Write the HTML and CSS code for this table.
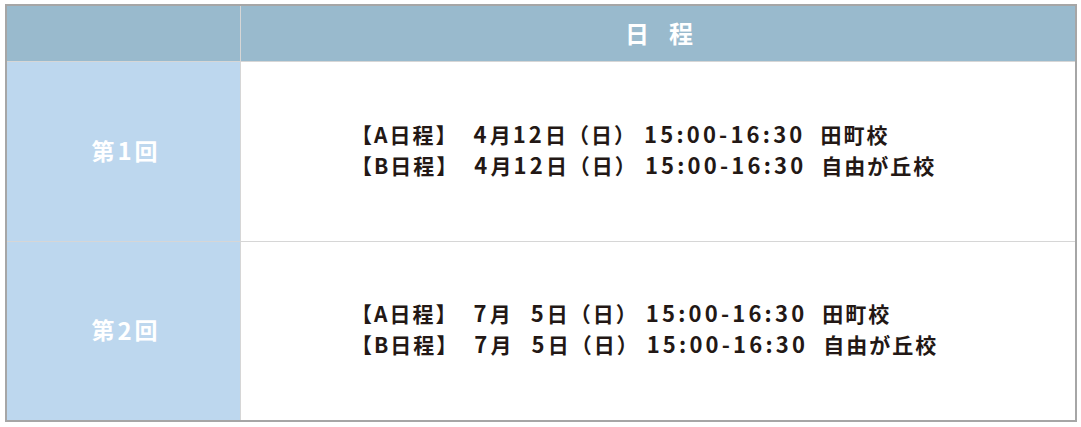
FILE: index.html
```html
<!DOCTYPE html>
<html lang="ja">
<head>
<meta charset="utf-8">
<link rel="stylesheet" href="styles.css">
</head>
<body>
<div class="schedule">
  <div class="head head-blank"></div>
  <div class="head head-title"><span>日</span><span>程</span></div>
  <div class="round">第<span class="rn">1</span>回</div>
  <div class="times">
    <div class="line">【A日程】<span class="gap"></span><span class="n">4</span>月<span class="n">12</span>日（日）<span class="n t">15:00-16:30</span>田町校</div>
    <div class="line">【B日程】<span class="gap"></span><span class="n">4</span>月<span class="n">12</span>日（日）<span class="n t">15:00-16:30</span>自由が丘校</div>
  </div>
  <div class="round">第<span class="rn">2</span>回</div>
  <div class="times">
    <div class="line">【A日程】<span class="gap"></span><span class="n">7</span>月<span class="n d">5</span>日（日）<span class="n t">15:00-16:30</span>田町校</div>
    <div class="line">【B日程】<span class="gap"></span><span class="n">7</span>月<span class="n d">5</span>日（日）<span class="n t">15:00-16:30</span>自由が丘校</div>
  </div>
</div>
</body>
</html>
```
FILE: styles.css
```css
html, body {
  margin: 0;
  padding: 0;
  background: #ffffff;
}
body {
  padding: 4px 0 0 5px;
  font-family: "Noto Sans CJK JP", "Noto Sans", sans-serif;
}
.schedule {
  width: 1068px;
  display: grid;
  grid-template-columns: 233px 834px;
  grid-template-rows: 55px 179px 178px;
  gap: 1px;
  background: #d6d6d6;
  border: 2px solid #a6a6a6;
}
.head {
  background: #99bacd;
}
.head-title {
  display: flex;
  align-items: center;
  justify-content: center;
  gap: 20px;
  color: #ffffff;
  font-weight: 700;
  font-size: 24px;
  padding-bottom: 3px;
  padding-left: 2px;
}
.round {
  background: #bdd7ee;
  color: #ffffff;
  font-weight: 700;
  font-size: 23px;
  display: flex;
  align-items: center;
  justify-content: center;
  padding-bottom: 4px;
  padding-left: 2px;
}
.rn {
  font-size: 24px;
  margin: 0 3px;
}
.times {
  background: #ffffff;
  color: #231815;
  font-weight: 700;
  font-size: 21px;
  letter-spacing: 2px;
  line-height: 30px;
  display: flex;
  flex-direction: column;
  justify-content: center;
  padding-left: 110px;
  padding-bottom: 6px;
  white-space: nowrap;
}
.gap {
  display: inline-block;
  width: 15px;
}
.n {
  font-size: 22px;
  letter-spacing: 3.2px;
}
.d {
  margin-left: 18px;
}
.t {
  margin-left: 7px;
  margin-right: 15px;
}
```
